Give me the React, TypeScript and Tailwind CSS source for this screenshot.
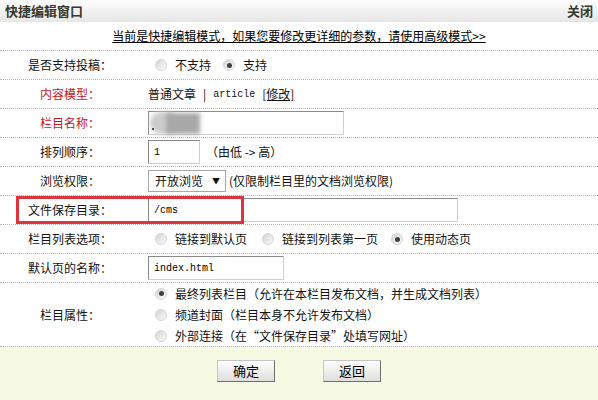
import React from 'react';

const font = { fontFamily: '"Noto Sans CJK SC", "Noto Sans", sans-serif' };

const Radio = ({ checked }: { checked?: boolean }) => (
  <span className="ml-[7px] mr-[8px] w-[12px] h-[12px] rounded-full border border-[#d6d6d6] bg-gradient-to-br from-[#d2d2d2] via-[#e8e8e8] to-[#fbfbfb] flex items-center justify-center shrink-0">
    {checked && <span className="w-[5px] h-[5px] rounded-full bg-[#404040]" />}
  </span>
);

const Row = ({
  label,
  red,
  children,
}: {
  label: string;
  red?: boolean;
  children?: React.ReactNode;
}) => (
  <div className="flex h-[29px] border-b border-dotted border-[#b4b4b4]">
    <div
      className={
        red
          ? 'w-[140px] shrink-0 flex items-center justify-center text-[#c8141e]'
          : 'w-[140px] shrink-0 flex items-center justify-center text-[#111]'
      }
    >
      {label}
    </div>
    <div className="flex items-center pl-[8px] flex-1">{children}</div>
  </div>
);

const inputCls =
  'h-[24px] border border-[#8a8a8a] border-r-[#cfcfcf] border-b-[#cfcfcf] bg-white px-[5px] text-[10px] text-black outline-none font-["Liberation_Mono",monospace]';

const Button = ({ children }: { children: React.ReactNode }) => (
  <button className="w-[58px] h-[22px] border border-[#c4c4c4] border-r-[#6e6e6e] border-b-[#6e6e6e] bg-gradient-to-b from-white to-[#dedede] text-[13px] text-black flex items-center justify-center">
    {children}
  </button>
);

const App: React.FC = () => {
  return (
    <div className="w-[598px] h-[400px] flex flex-col bg-white text-[12px] text-[#111]" style={font}>
      {/* title bar */}
      <div className="h-[22px] shrink-0 flex items-center justify-between px-[5px] bg-gradient-to-b from-[#fdfdfd] to-[#e6e6e6] text-[13px] font-bold text-[#35382e]">
        <span>快捷编辑窗口</span>
        <span>关闭</span>
      </div>

      <div className="h-[29px] flex items-center justify-center border-b border-dotted border-[#b4b4b4]">
        <a className="underline text-black">当前是快捷编辑模式，如果您要修改更详细的参数，请使用高级模式&gt;&gt;</a>
      </div>

      <Row label="是否支持投稿：">
        <Radio />
        <span className="mr-[5px]">不支持</span>
        <Radio checked />
        <span>支持</span>
      </Row>

      <Row label="内容模型：" red>
        <span>普通文章</span>
        <span className="mx-[7px]">|</span>
        <span className="font-['Liberation_Mono',monospace] text-[10px]">article</span>
        <a className="ml-[7px] underline">[修改]</a>
      </Row>

      <Row label="栏目名称：" red>
        <div className="relative">
          <input readOnly value="" className={`${inputCls} w-[196px]`} />
          {/* blurred-out name */}
          <div className="absolute left-[2px] top-[1px] w-[28px] h-[22px] rounded-full bg-[#cdcdcd] blur-[2px]" />
          <div className="absolute left-[18px] top-[2px] w-[34px] h-[21px] bg-[#a8a8a8] blur-[2px]" />
          <div className="absolute left-[4px] top-[17px] w-[2px] h-[2px] bg-[#555]" />
        </div>
      </Row>

      <Row label="排列顺序：">
        <input readOnly value="1" className={`${inputCls} w-[52px]`} />
        <span className="ml-[6px]">（由低 -&gt; 高）</span>
      </Row>

      <Row label="浏览权限：">
        <div className="h-[22px] w-[78px] border border-[#a8a8a8] flex items-center justify-between pl-[6px] pr-[5px]">
          <span>开放浏览</span>
          <span className="text-[8px]">▼</span>
        </div>
        <span className="ml-[3px]">(仅限制栏目里的文档浏览权限)</span>
      </Row>

      <div className="relative">
        <Row label="文件保存目录：">
          <input readOnly value="/cms" className={`${inputCls} w-[310px]`} />
        </Row>
        <div className="absolute left-[16px] top-0 w-[228px] h-[28px] border-[3px] border-[#e0343c] pointer-events-none" />
      </div>

      <Row label="栏目列表选项：">
        <Radio />
        <span className="mr-[8px]">链接到默认页</span>
        <Radio />
        <span className="mr-[6px]">链接到列表第一页</span>
        <Radio checked />
        <span>使用动态页</span>
      </Row>

      <Row label="默认页的名称：">
        <input readOnly value="index.html" className={`${inputCls} w-[136px]`} />
      </Row>

      <div className="flex h-[64px] border-b border-dotted border-[#b4b4b4]">
        <div className="w-[140px] shrink-0 flex items-center justify-center">栏目属性：</div>
        <div className="flex flex-col justify-center pl-[8px]">
          <div className="flex items-center h-[21px]">
            <Radio checked />
            <span>最终列表栏目（允许在本栏目发布文档，并生成文档列表）</span>
          </div>
          <div className="flex items-center h-[21px]">
            <Radio />
            <span>频道封面（栏目本身不允许发布文档）</span>
          </div>
          <div className="flex items-center h-[21px]">
            <Radio />
            <span>外部连接（在“文件保存目录”处填写网址）</span>
          </div>
        </div>
      </div>

      <div className="flex-1 bg-[#f8fbe3] flex justify-center gap-[48px] pt-[13px]">
        <Button>确定</Button>
        <Button>返回</Button>
      </div>
    </div>
  );
};

export default App;
